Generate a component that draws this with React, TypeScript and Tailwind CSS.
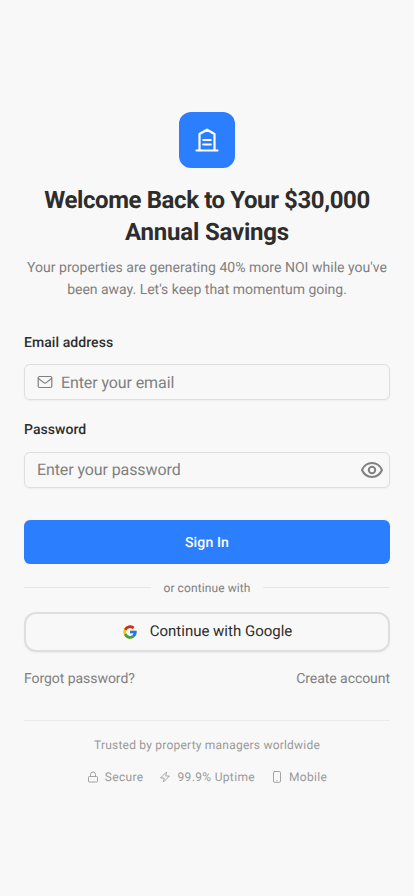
import React from "react";

type IconProps = { className?: string };

function BuildingIcon({ className }: IconProps) {
  return (
    <svg className={className} viewBox="0 0 24 24" fill="none" stroke="currentColor" strokeWidth="2.200" strokeLinecap="round" strokeLinejoin="round">
      <path d="M1.500 22.500h21M4.500 22.500V6L12 1.700 19.500 6v16.500M8.300 12h7.400M8.300 16.500h7.400" />
    </svg>
  );
}

function MailIcon({ className }: IconProps) {
  return (
    <svg className={className} viewBox="0 0 16 16" fill="none" stroke="currentColor" strokeWidth="1.200" strokeLinecap="round" strokeLinejoin="round">
      <rect x="1.200" y="2.500" width="13.600" height="11" rx="1.200" />
      <path d="M1.500 4.500 6.700 8.600a2 2 0 0 0 2.600 0L14.500 4.500" />
    </svg>
  );
}

function EyeIcon({ className }: IconProps) {
  return (
    <svg className={className} viewBox="0 0 24 24" fill="none" stroke="currentColor" strokeWidth="2" strokeLinejoin="round">
      <path d="M2 12c2-4.500 5.700-7 10-7s8 2.500 10 7c-2 4.500-5.700 7-10 7s-8-2.500-10-7Z" />
      <circle cx="12" cy="12" r="3.200" />
    </svg>
  );
}

function GoogleIcon({ className }: IconProps) {
  return (
    <svg className={className} viewBox="0 0 48 48">
      <path fill="#FFC107" d="M43.600 20H24v8h11.300A12 12 0 1 1 24 12c3 0 5.800 1.200 7.900 3l5.700-5.700A20 20 0 1 0 44 24c0-1.300-.1-2.700-.4-4Z" />
      <path fill="#D52B1E" d="m6.300 14.700 6.600 4.800A12 12 0 0 1 24 12c3 0 5.800 1.200 7.900 3l5.700-5.700A20 20 0 0 0 6.300 14.700Z" />
      <path fill="#43A047" d="M24 44c5.200 0 9.900-2 13.400-5.200l-6.200-5.200A12 12 0 0 1 12.700 28l-6.500 5A20 20 0 0 0 24 44Z" />
      <path fill="#1976FF" d="M43.600 20H24v8h11.300a12 12 0 0 1-4.100 5.600l6.200 5.200C37 39.200 44 34 44 24c0-1.300-.1-2.700-.4-4Z" />
    </svg>
  );
}

function LockIcon({ className }: IconProps) {
  return (
    <svg className={className} viewBox="0 0 12 12" fill="none" stroke="currentColor" strokeWidth="0.900" strokeLinejoin="round">
      <rect x="1.500" y="5.500" width="9" height="5.500" rx="0.800" />
      <path d="M3.500 5.500V3.500a2.500 2.500 0 0 1 5 0v2" />
    </svg>
  );
}

function BoltIcon({ className }: IconProps) {
  return (
    <svg className={className} viewBox="0 0 12 12" fill="none" stroke="currentColor" strokeWidth="0.850" strokeLinejoin="round">
      <path d="M7.500 1 1.500 7h3.700L4.500 11l6-6H6.800Z" />
    </svg>
  );
}

function PhoneIcon({ className }: IconProps) {
  return (
    <svg className={className} viewBox="0 0 12 12" fill="none" stroke="currentColor" strokeWidth="0.900" strokeLinecap="round">
      <rect x="2.500" y="0.500" width="7" height="10.800" rx="1.200" />
      <path d="M5.700 9.500h.6" strokeWidth="0.600" />
    </svg>
  );
}

export default function App() {
  return (
    <main className="flex min-h-screen flex-col justify-center bg-[#f8f8f8] px-6 font-['Roboto',sans-serif] text-[#2d2d2d] [text-rendering:geometricPrecision]">
      <header className="flex flex-col items-center text-center">
        <div className="flex size-14 items-center justify-center rounded-xl bg-[#2b7fff]">
          <BuildingIcon className="size-6 text-white" />
        </div>
        <h1 className="mt-4 text-2xl leading-8 font-bold tracking-[-0.4px]">
          Welcome Back to Your $30,000
          <br />
          <span className="tracking-[-0.2px]">Annual Savings</span>
        </h1>
        <p className="mt-[9px] -mb-px text-sm leading-[22px] tracking-[0.03px] whitespace-nowrap text-[#808080]">
          Your properties are generating 40% more NOI while you've
          <br />
          <span className="tracking-[-0.01px]">been away. Let's keep that momentum going.</span>
        </p>
      </header>

      <form className="mt-8" onSubmit={(e) => e.preventDefault()}>
        <label htmlFor="email" className="block h-5 text-sm leading-[22px] font-medium tracking-[0.07px]">Email address</label>
        <div className="mt-3 flex h-9 items-center gap-2 rounded-md border border-[#dedede] px-3 shadow-xs">
          <MailIcon className="size-4 shrink-0 text-[#808080]" />
          <input id="email" type="email" placeholder="Enter your email" className="min-w-0 flex-1 pt-0.5 text-base tracking-[-0.1px] outline-none [text-rendering:geometricPrecision] placeholder:text-[#808080]" />
        </div>
        <label htmlFor="password" className="mt-[19px] block h-5 text-sm leading-[22px] font-medium tracking-[0.05px]">Password</label>
        <div className="mt-[13px] flex h-9 items-center rounded-md border border-[#dedede] pr-[5px] pl-3 shadow-xs">
          <input id="password" type="password" placeholder="Enter your password" className="min-w-0 flex-1 text-base tracking-[-0.1px] outline-none [text-rendering:geometricPrecision] placeholder:text-[#808080]" />
          <button type="button" aria-label="Show password">
            <EyeIcon className="size-6 text-[#808080]" />
          </button>
        </div>
        <button className="mt-8 flex h-11 w-full items-center justify-center rounded-md bg-[#2b7fff] pt-0.5 text-sm font-medium tracking-[0.14px] text-white [text-rendering:geometricPrecision]">Sign In</button>
      </form>

      <div className="mt-4 flex h-4 items-center gap-3 text-xs tracking-[0.1px] text-[#808080]">
        <span className="h-px flex-1 bg-[#e5e5e5]" />
        or continue with
        <span className="h-px flex-1 bg-[#e5e5e5]" />
      </div>

      <button className="mt-4 flex h-10 items-center justify-center gap-3 rounded-xl border-2 border-[#dedede] text-[15px] shadow-xs [text-rendering:geometricPrecision]">
        <GoogleIcon className="size-4" />
        Continue with Google
      </button>

      <nav className="mt-4 flex h-5 justify-between text-sm leading-[22px] tracking-[-0.05px] text-[#808080]">
        <a href="#forgot">Forgot password?</a>
        <a href="#create">Create account</a>
      </nav>

      <footer className="mt-8 border-t border-[#ebebeb] pt-4 text-center text-xs leading-4 tracking-[0.22px] text-[#999999]">
        <p>Trusted by property managers worldwide</p>
        <div className="mt-4 flex justify-center gap-4 tracking-[0.34px]">
          <span className="flex items-center gap-1.5"><LockIcon className="size-3" />Secure</span>
          <span className="flex items-center gap-1.5"><BoltIcon className="size-3" />99.9% Uptime</span>
          <span className="flex items-center gap-1.5"><PhoneIcon className="size-3" />Mobile</span>
        </div>
      </footer>
    </main>
  );
}
